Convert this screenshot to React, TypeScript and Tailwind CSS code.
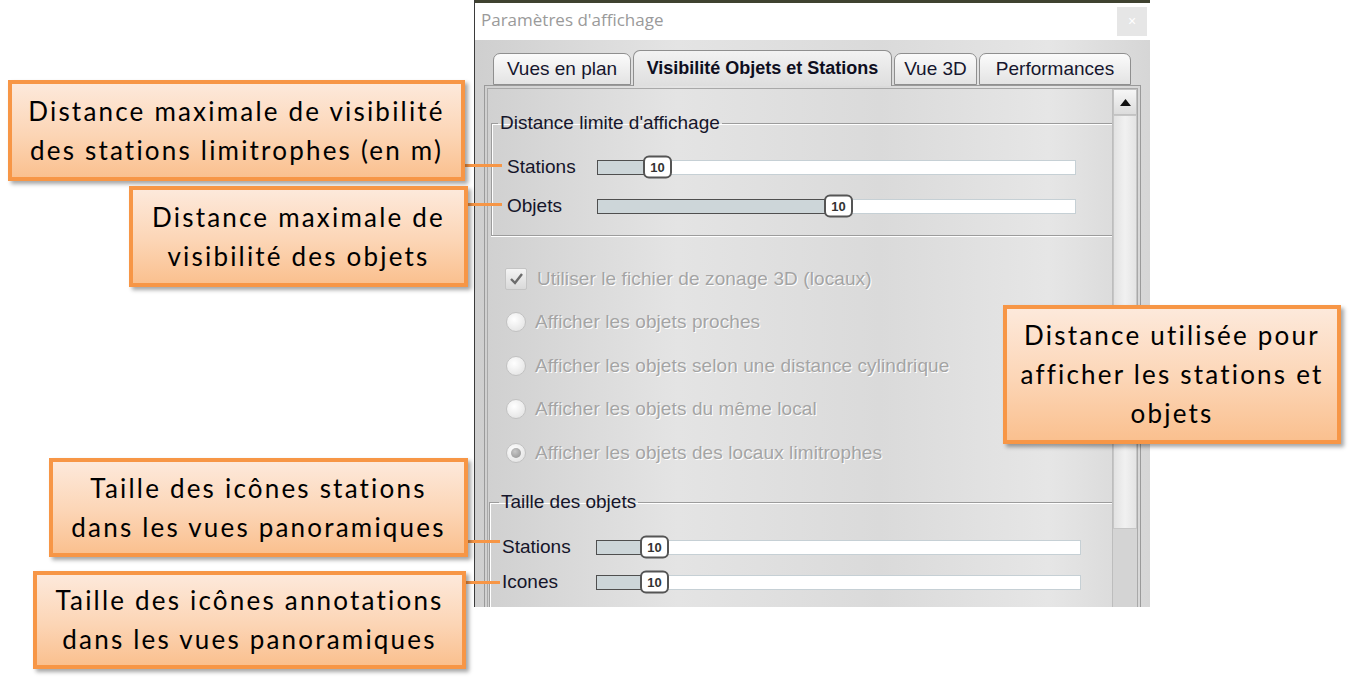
import React from 'react';

type SliderProps = {
  track: string;
  fill: number;
  thumb: number;
};

function Slider({ track, fill, thumb }: SliderProps) {
  return (
    <div className={`relative h-[15px] bg-white border border-[#c6d0d5] ${track}`}>
      <div
        className="absolute left-[-1px] top-[-1px] bottom-[-1px] bg-[#cdd6d9] border border-[#4f4f4f]"
        style={{ width: fill }}
      />
      <div
        className="absolute top-1/2 -translate-y-1/2 w-[29px] h-[23px] bg-white border-2 border-[#555] rounded-[6px] flex items-center justify-center text-[13px] font-semibold text-[#333] font-['Liberation_Sans',sans-serif]"
        style={{ left: thumb }}
      >
        10
      </div>
    </div>
  );
}

const disabledText = 'text-[19px] text-[#a4a4a4] [text-shadow:1px_1px_0_#ffffff] tracking-[0.1px]';

function Radio({ checked, label }: { checked?: boolean; label: string }) {
  return (
    <div className="flex items-center gap-[9px] h-[43.5px]">
      <div className="ml-[1px] w-[20px] h-[20px] rounded-full border border-[#c2c2c2] bg-[radial-gradient(circle_at_40%_35%,#ffffff,#dedede)] flex items-center justify-center">
        {checked && <div className="w-[10px] h-[10px] rounded-full bg-[radial-gradient(circle_at_40%_35%,#c8c8c8,#8f8f8f)]" />}
      </div>
      <span className={disabledText}>{label}</span>
    </div>
  );
}

function Callout({ className, lines }: { className: string; lines: string[] }) {
  return (
    <div
      className={`absolute z-20 flex flex-col items-center justify-center border-[4px] border-[#f79646] bg-[linear-gradient(180deg,#fde9db,#fcd5b5_55%,#fac08f)] shadow-[3px_3px_4px_rgba(0,0,0,0.35)] font-['Lato',sans-serif] text-[26px] leading-[39px] tracking-[2.2px] text-black text-center ${className}`}
    >
      {lines.map((l) => (
        <div key={l} className="whitespace-nowrap">{l}</div>
      ))}
    </div>
  );
}

export default function App() {
  return (
    <div className="relative w-[1356px] h-[691px] bg-white overflow-hidden font-['Liberation_Sans',sans-serif]">
      {/* dialog window */}
      <div className="ml-[474px] w-[676px] h-[607px] flex flex-col border-l border-[#3b3b3b]">
        <div className="h-[3px] bg-[#3f4230]" />
        <div className="h-[37px] bg-white flex items-center justify-between pl-[6px] pr-[3px]">
          <span className="font-['Open_Sans',sans-serif] text-[17px] text-[#9a9a9a] -mt-[3px]">Paramètres d'affichage</span>
          <div className="w-[30px] h-[29px] bg-[#e6e6e6] flex items-center justify-center text-[14px] text-white">×</div>
        </div>

        <div className="flex-1 flex flex-col overflow-hidden bg-[linear-gradient(90deg,#cfcfcf,#e4e4e4_30%,#dadada_60%,#e6e6e6_85%,#d6d6d6)]">
          {/* tabs */}
          <div className="h-[45px] pt-[10px] pl-[18px] flex items-end gap-[2px] relative z-10">
            <div className="w-[138px] h-[32px] flex items-center justify-center rounded-t-[7px] border border-[#8f8f8f] bg-[linear-gradient(180deg,#fbfbfb,#e3e3e3)] text-[19px] text-[#16162e]">
              Vues en plan
            </div>
            <div className="w-[259px] h-[36px] -mb-[1px] flex items-center justify-center rounded-t-[7px] border border-b-0 border-[#8f8f8f] bg-[linear-gradient(180deg,#f2f2f2,#dedede)] text-[18px] font-bold text-[#0e0e1e]">
              Visibilité Objets et Stations
            </div>
            <div className="w-[83px] h-[32px] flex items-center justify-center rounded-t-[7px] border border-[#8f8f8f] bg-[linear-gradient(180deg,#fbfbfb,#e3e3e3)] text-[19px] text-[#16162e]">
              Vue 3D
            </div>
            <div className="w-[152px] h-[32px] flex items-center justify-center rounded-t-[7px] border border-[#8f8f8f] bg-[linear-gradient(180deg,#fbfbfb,#e3e3e3)] text-[19px] text-[#16162e]">
              Performances
            </div>
          </div>

          {/* tab panel */}
          <div className="flex-1 mx-[9px] border border-[#9a9a9a] p-[2px] flex">
            <div className="flex-1 flex border border-[#a9a9a9]">
              <div className="flex-1 flex flex-col pt-[23px] text-[19px] text-[#15152a]">
                <fieldset className="ml-[3px] border border-r-0 border-[#9c9c9c] shadow-[inset_1px_1px_0_#ffffff,0_1px_0_#ffffff] pl-[15px] pr-[31px] pb-[14px]">
                  <legend className="-ml-[9px] px-[2px] leading-[22px]">Distance limite d'affichage</legend>
                  <div className="mt-[18px] flex flex-col gap-[9px]">
                    <div className="h-[30px] flex items-center">
                      <span className="w-[90px]">Stations</span>
                      <Slider track="w-[479px]" fill={48} thumb={45} />
                    </div>
                    <div className="h-[30px] flex items-center">
                      <span className="w-[90px]">Objets</span>
                      <Slider track="w-[479px]" fill={229} thumb={226} />
                    </div>
                  </div>
                </fieldset>

                <div className="mt-[21px] pl-[17px] flex flex-col">
                  <div className="flex items-center gap-[10px] h-[43.5px]">
                    <div className="w-[22px] h-[22px] border border-[#c4c4c4] rounded-[2px] bg-[linear-gradient(180deg,#f4f4f4,#d9d9d9)] flex items-center justify-center">
                      <svg width="15" height="13" viewBox="0 0 15 13">
                        <path d="M2 7 L6 11 L13 2" fill="none" stroke="#6b6b6b" strokeWidth="2.4" />
                      </svg>
                    </div>
                    <span className={disabledText}>Utiliser le fichier de zonage 3D (locaux)</span>
                  </div>
                  <Radio label="Afficher les objets proches" />
                  <Radio label="Afficher les objets selon une distance cylindrique" />
                  <Radio label="Afficher les objets du même local" />
                  <Radio checked label="Afficher les objets des locaux limitrophes" />
                </div>

                <fieldset className="mt-[16.5px] ml-[1px] border border-r-0 border-[#9c9c9c] shadow-[inset_1px_1px_0_#ffffff,0_1px_0_#ffffff] pl-[12px] pr-[29px] pb-[14px]">
                  <legend className="-ml-[3px] px-[2px] leading-[22px]">Taille des objets</legend>
                  <div className="mt-[20px] flex flex-col gap-[7px]">
                    <div className="h-[28px] flex items-center">
                      <span className="w-[94px]">Stations</span>
                      <Slider track="w-[485px]" fill={46} thumb={43} />
                    </div>
                    <div className="h-[28px] flex items-center">
                      <span className="w-[94px]">Icones</span>
                      <Slider track="w-[485px]" fill={46} thumb={43} />
                    </div>
                  </div>
                </fieldset>
              </div>

              {/* scrollbar */}
              <div className="w-[25px] flex flex-col bg-[#d4d4d4] border-l border-[#bdbdbd]">
                <div className="h-[26px] border border-[#c2c2c2] bg-[linear-gradient(180deg,#f6f6f6,#dcdcdc)] flex items-center justify-center">
                  <svg width="11" height="7" viewBox="0 0 11 7">
                    <path d="M0 7 L5.5 0 L11 7 Z" fill="#111" />
                  </svg>
                </div>
                <div className="h-[414px] border border-[#c6c6c6] bg-[linear-gradient(90deg,#e2e2e2,#f1f1f1_50%,#e4e4e4)]" />
              </div>
            </div>
          </div>
        </div>
      </div>

      {/* connector lines */}
      <div className="absolute z-10 left-[465px] top-[164px] w-[37px] h-[3px] bg-[#f79646]" />
      <div className="absolute z-10 left-[468px] top-[203px] w-[34px] h-[3px] bg-[#f79646]" />
      <div className="absolute z-10 left-[468px] top-[540px] w-[32px] h-[3px] bg-[#f79646]" />
      <div className="absolute z-10 left-[466px] top-[581px] w-[34px] h-[3px] bg-[#f79646]" />

      {/* callouts */}
      <Callout
        className="left-[8px] top-[80px] w-[457px] h-[101px]"
        lines={['Distance maximale de visibilité', 'des stations limitrophes (en m)']}
      />
      <Callout
        className="left-[129px] top-[186px] w-[339px] h-[101px]"
        lines={['Distance maximale de', 'visibilité des objets']}
      />
      <Callout
        className="left-[1003px] top-[305px] w-[338px] h-[139px]"
        lines={['Distance utilisée pour', 'afficher les stations et', 'objets']}
      />
      <Callout
        className="left-[49px] top-[458px] w-[419px] h-[99px]"
        lines={['Taille des icônes stations', 'dans les vues panoramiques']}
      />
      <Callout
        className="left-[33px] top-[571px] w-[433px] h-[98px]"
        lines={['Taille des icônes annotations', 'dans les vues panoramiques']}
      />
    </div>
  );
}
